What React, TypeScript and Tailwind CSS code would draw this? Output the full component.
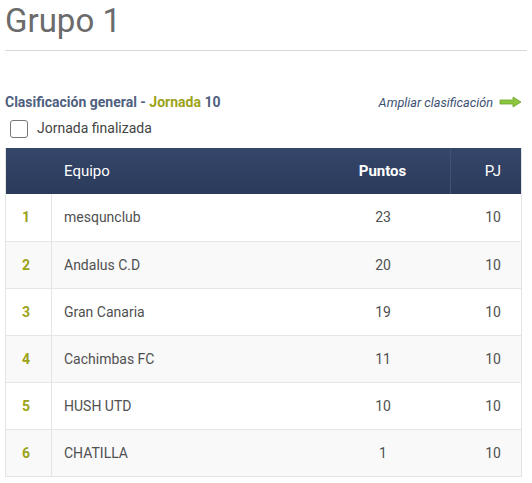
import * as React from "react";

const rows = [
  { pos: 1, team: "mesqunclub", pts: 23, pj: 10 },
  { pos: 2, team: "Andalus C.D", pts: 20, pj: 10 },
  { pos: 3, team: "Gran Canaria", pts: 19, pj: 10 },
  { pos: 4, team: "Cachimbas FC", pts: 11, pj: 10 },
  { pos: 5, team: "HUSH UTD", pts: 10, pj: 10 },
  { pos: 6, team: "CHATILLA", pts: 1, pj: 10 },
];

function Arrow() {
  return (
    <svg width="23" height="12" viewBox="0 0 23 12" className="ml-[6px]">
      <path d="M1 4h13V1l8 5-8 5V8H1z" fill="#8cc63f" stroke="#6aa329" strokeWidth="0.8" />
    </svg>
  );
}

export default function App() {
  return (
    <div className="w-[532px] h-[483px] bg-white overflow-hidden font-['Roboto',sans-serif]">
      <div className="px-[5px] pt-[2px]">
        <h1 className="text-[33px] leading-[38px] text-[#6b6b6b] font-normal">Grupo 1</h1>
        <div className="mt-[10px] h-px bg-[#d9d9d9]" />
      </div>

      <div className="mt-[41px] px-[5px] flex items-center justify-between">
        <div className="text-[14px] font-bold text-[#4f5f7f]">
          Clasificación general - <span className="text-[#9ca317]">Jornada</span> 10
        </div>
        <div className="flex items-center mr-[5px] text-[12.7px] italic text-[#3c4f72]">
          Ampliar clasificación
          <Arrow />
        </div>
      </div>

      <div className="mt-[5px] ml-[10px] flex items-center gap-[9px]">
        <div className="w-[18px] h-[18px] rounded-[3px] border border-[#777] bg-white" />
        <span className="text-[14px] text-[#444]">Jornada finalizada</span>
      </div>

      <div className="mt-[9px] mx-[5px] w-[517px] border border-[#e3e3e3] border-t-0">
        <div className="flex h-[46px] items-center bg-[linear-gradient(180deg,#34466a,#2b3b5b)] text-white text-[15px]">
          <div className="w-[46px]" />
          <div className="flex-1 pl-[12px]">Equipo</div>
          <div className="w-[136px] text-center font-bold h-full flex items-center justify-center border-r border-[#3f5175]">Puntos</div>
          <div className="w-[70px] h-full flex items-center justify-end pr-[20px]">PJ</div>
        </div>
        {rows.map((r, i) => (
          <div
            key={r.pos}
            className={`flex h-[47px] items-center text-[14px] text-[#505050] ${i % 2 === 1 ? "bg-[#f9f9f9]" : "bg-white"} ${i > 0 ? "border-t border-[#e6e6e6]" : ""}`}
          >
            <div className="w-[46px] h-full flex items-center pl-[16px] border-r border-[#e3e3e3] font-bold text-[#9ca317]">
              {r.pos}
            </div>
            <div className="flex-1 pl-[12px]">{r.team}</div>
            <div className="w-[136px] text-center">{r.pts}</div>
            <div className="w-[70px] text-right pr-[20px]">{r.pj}</div>
          </div>
        ))}
      </div>
    </div>
  );
}
